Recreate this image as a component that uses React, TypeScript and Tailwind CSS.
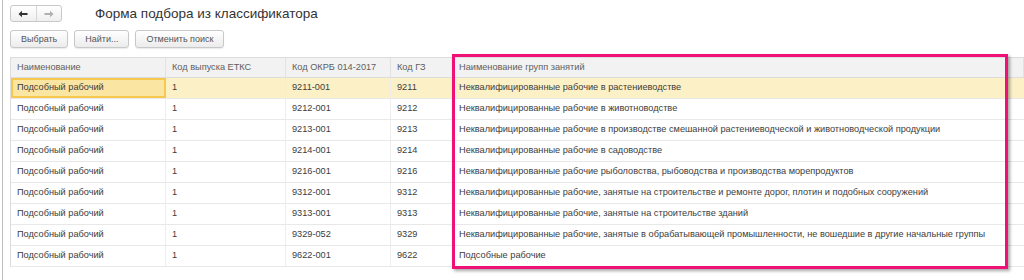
import React from 'react';

const rows = [
    ['Подсобный рабочий', '1', '9211-001', '9211', 'Неквалифицированные рабочие в растениеводстве'],
    ['Подсобный рабочий', '1', '9212-001', '9212', 'Неквалифицированные рабочие в животноводстве'],
    ['Подсобный рабочий', '1', '9213-001', '9213', 'Неквалифицированные рабочие в производстве смешанной растениеводческой и животноводческой продукции'],
    ['Подсобный рабочий', '1', '9214-001', '9214', 'Неквалифицированные рабочие в садоводстве'],
    ['Подсобный рабочий', '1', '9216-001', '9216', 'Неквалифицированные рабочие рыболовства, рыбоводства и производства морепродуктов'],
    ['Подсобный рабочий', '1', '9312-001', '9312', 'Неквалифицированные рабочие, занятые на строительстве и ремонте дорог, плотин и подобных сооружений'],
    ['Подсобный рабочий', '1', '9313-001', '9313', 'Неквалифицированные рабочие, занятые на строительстве зданий'],
    ['Подсобный рабочий', '1', '9329-052', '9329', 'Неквалифицированные рабочие, занятые в обрабатывающей промышленности, не вошедшие в другие начальные группы'],
    ['Подсобный рабочий', '1', '9622-001', '9622', 'Подсобные рабочие'],
];

const headers = ['Наименование', 'Код выпуска ЕТКС', 'Код ОКРБ 014-2017', 'Код ГЗ', 'Наименование групп занятий'];
const cols = 'grid grid-cols-[155px_120px_105px_62px_1fr]';

const ToolButton = ({ label }: { label: string }) => (
    <button className="h-[18px] px-[10px] rounded-[3px] border border-[#c8c8c8] bg-gradient-to-b from-white to-[#ececec] text-[9px] text-[#555] leading-none shadow-[0_1px_1px_rgba(0,0,0,0.08)]">
        {label}
    </button>
);

const Arrow = ({ dir, color }: { dir: 'l' | 'r'; color: string }) => (
    <svg width="10" height="8" viewBox="0 0 10 8" className={dir === 'r' ? 'rotate-180' : ''}>
        <path d="M0.5 4 L4 0.8 L4 3.1 L9.5 3.1 L9.5 4.9 L4 4.9 L4 7.2 Z" fill={color} />
    </svg>
);

export default function App() {
    return (
        <div className="relative w-[1024px] h-[280px] bg-white overflow-hidden text-[#333]" style={{ fontFamily: '"Liberation Sans", Arial, sans-serif' }}>
            <div className="absolute left-[2px] top-0 bottom-0 w-px bg-[#bdbdbd]" />

            <div className="pl-[10px] pt-[5px]">
                <div className="flex items-center h-[17px]">
                    <div className="flex h-[17px] w-[52px] rounded-[3px] border border-[#c8c8c8] bg-gradient-to-b from-white to-[#efefef]">
                        <div className="flex-1 flex items-center justify-center border-r border-[#d5d5d5]">
                            <Arrow dir="l" color="#333" />
                        </div>
                        <div className="flex-1 flex items-center justify-center">
                            <Arrow dir="r" color="#b0b0b0" />
                        </div>
                    </div>
                    <div className="ml-[33px] mt-[1px] text-[13.5px] text-[#333]">Форма подбора из классификатора</div>
                </div>

                <div className="flex gap-[6px] mt-[8px]">
                    <ToolButton label="Выбрать" />
                    <ToolButton label="Найти..." />
                    <ToolButton label="Отменить поиск" />
                </div>
            </div>

            <div className="ml-[10px] mt-[9px] border-t border-l border-[#dcdcdc] text-[9.2px] text-[#3c3c3c]">
                <div className={`${cols} h-[20px] bg-[#f2f2f2] text-[#606060] border-b border-[#dcdcdc]`}>
                    {headers.map((h, i) => (
                        <div key={i} className="flex items-center px-[6px] border-r border-[#e2e2e2] whitespace-nowrap">{h}</div>
                    ))}
                </div>
                {rows.map((r, ri) => (
                    <div key={ri} className={`${cols} h-[21px] border-b border-[#e8e8e8] ${ri === 0 ? 'bg-[#fcf0c6]' : 'bg-white'}`}>
                        {r.map((c, ci) => (
                            <div
                                key={ci}
                                className={`flex items-center px-[6px] whitespace-nowrap ${ci < 4 ? 'border-r border-[#ededed]' : ''} ${ri === 0 && ci === 0 ? 'bg-[#fbe5a2] outline outline-2 -outline-offset-2 outline-[#f6c94e]' : ''}`}
                            >
                                {c}
                            </div>
                        ))}
                    </div>
                ))}
            </div>

            {/* annotation frame */}
            <div className="absolute left-[452px] top-[54px] w-[556px] h-[215px] border-[3px] border-[#ee1277] shadow-[2px_2px_3px_rgba(0,0,0,0.35)] pointer-events-none" />
        </div>
    );
}
